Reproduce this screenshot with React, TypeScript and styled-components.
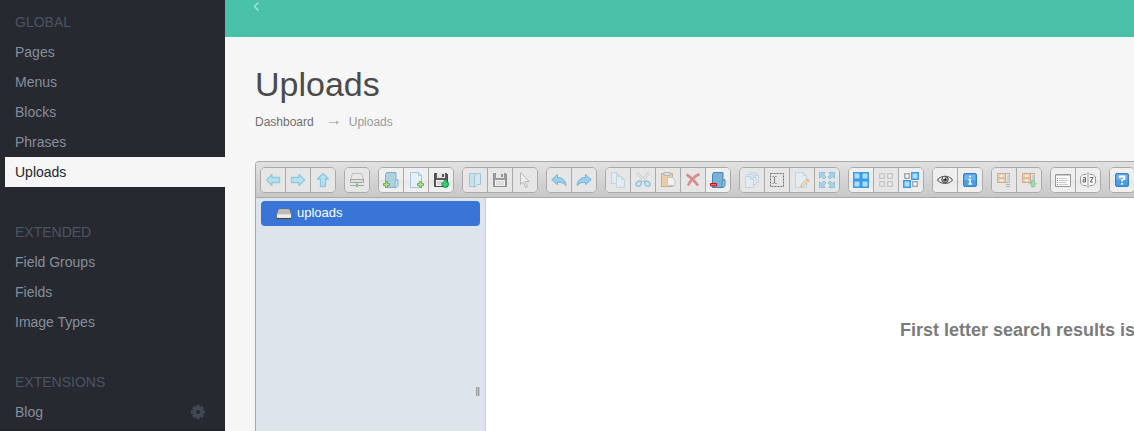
import React from 'react';
import styled, { createGlobalStyle } from 'styled-components';

const Global = createGlobalStyle`
  * { box-sizing: border-box; }
  body { margin: 0; overflow: hidden; background: #f6f6f6; font-family: "Liberation Sans", Arial, sans-serif; }
`;
const Page = styled.div`display: flex; width: 100vw; height: 100vh; overflow: hidden;`;
const Sidebar = styled.nav`
  width: 225px; flex: none; height: 100vh; overflow: hidden;
  background: #262930; padding-top: 7px;
`;
const Section = styled.section`margin-bottom: 30px;`;
const SectionTitle = styled.div`
  height: 30px; line-height: 30px; padding-left: 15px; font-size: 14px; color: #4c5462; text-transform: uppercase;
`;
const NavItem = styled.a<{ $active?: boolean }>`
  display: flex; align-items: center; justify-content: space-between;
  height: 30px; margin-left: 5px; padding: 0 20px 0 10px; font-size: 14px;
  color: ${p => (p.$active ? '#22262e' : '#868e9b')};
  background: ${p => (p.$active ? '#f6f6f6' : 'transparent')};
`;
const NavDivider = styled.div`height: 1px; margin-top: 3px; background: #1d1f26;`;
const Main = styled.main`flex: 1; min-width: 0; display: flex; flex-direction: column;`;
const TopBar = styled.header`
  height: 37px; flex: none; background: #4ac1a9; padding: 1px 0 0 28px;
  svg { display: block; }
`;
const Content = styled.div`flex: 1; min-height: 0; display: flex; flex-direction: column; padding: 27px 0 0 30px;`;
const Title = styled.h1`margin: 0; height: 40px; line-height: 40px; font-size: 34px; font-weight: 400; color: #4b4b4d;`;
const Crumbs = styled.div`
  display: flex; align-items: center; height: 18px; margin-top: 9px; font-size: 12px; color: #9b9b9b;
  a { color: #6f6f6f; }
  svg { margin: 0 9px 0 15px; }
`;
const Manager = styled.div`
  flex: 1; min-height: 0; width: 1100px; margin-top: 30px; display: flex; flex-direction: column;
  border: 1px solid #aaa; border-bottom: 0; border-radius: 4px 4px 0 0; overflow: hidden; background: #fff;
`;
const Toolbar = styled.div`
  display: flex; gap: 8px; height: 36px; flex: none; padding: 5px 4px 0;
  border-bottom: 1px solid #aaa; background: linear-gradient(#e1e1e1, #c8c8c8);
`;
const Group = styled.div`
  display: flex; flex: none; height: 26px; border: 1px solid #aaa; border-radius: 5px; overflow: hidden;
`;
const Button = styled.span<{ $off?: boolean }>`
  box-sizing: content-box; flex: none; width: 16px; height: 16px; padding: 4px;
  background: ${p => (p.$off ? '#e6e6e6' : 'linear-gradient(#efefef 0 50%, #e7e7e7 50%, #f1f1f1)')};
  & + & { border-left: 1px solid #aaa; }
  svg { display: block; }
`;
const Work = styled.div`display: flex; flex: 1; min-height: 0;`;
const Tree = styled.aside`
  width: 230px; flex: none; display: flex; flex-direction: column; padding: 3px 5px 35px;
  background: #dde4eb; border-right: 1px solid #ccc;
`;
const TreeItem = styled.div`
  display: flex; align-items: center; height: 25px; flex: none; padding: 0 0 2px 15px; gap: 5px;
  border-radius: 4px; background: #3875d7; color: #fff; font-size: 13px;
  svg { margin-top: 3px; }
`;
const Grip = styled.i`
  align-self: flex-end; margin-top: auto; width: 4px; height: 9px;
  background: linear-gradient(90deg, #999 0 1px, #c5c8cc 1px 2px, #999 2px 3px, #c5c8cc 3px);
`;
const Files = styled.div`flex: 1; padding-top: 121px; padding-left: 414px; overflow: hidden;`;
const Message = styled.div`white-space: nowrap; font-size: 18px; line-height: 22px; font-weight: 700; color: #7b7b7b;`;

type IconName = keyof typeof drawings;
const pageShape = (x: number, y: number, w: number, h: number) => (
  <path d={`M${x} ${y}h${w - 3}l3 3v${h - 3}h-${w}zM${x + w - 3} ${y}v3h3`} fill="#e4f0f8" stroke="#a6c8dd" />
);
const plus = (x: number, y: number) => (
  <path d={`M${x + 2} ${y}h2v2h2v2h-2v2h-2v-2h-2v-2h2z`} fill="#b5e08e" stroke="#5fae45" strokeWidth=".9" />
);
const arrowL = <path d="M1.500 8L7 2.500v3h7.500v5H7v3z" fill="#a8dff5" stroke="#7cc0dc" strokeWidth="1.300" strokeLinejoin="round" />;
const undo = <path d="M.700 7.500L6.500 2.500v3c5 0 8 2.500 8.500 8C12.500 11 10.500 10.300 6.500 10.300v2.500z" fill="#7fc6f0" stroke="#4b9ccc" strokeWidth=".9" />;
const floppy = (
  <>
    <path d="M1.500 1.500h12l1 1v12h-13z" fill="#5b5b5b" stroke="#4a4a4a" />
    <path d="M4 1h8v5H4z" fill="#e6e6e6" /><path d="M9 2h2v3H9z" fill="#555" />
    <path d="M3 8h10v6H3z" fill="#f4f4f4" /><path d="M4 10h8M4 12h8" stroke="#bbb" />
  </>
);
const folder = (fill: string, light: string, line: string) => (
  <>
    <path d="M3.500.500h9.500v15H2.500v-13z" fill={fill} stroke={line} />
    <path d="M12 15.500V10l1.500-2.500h1.500v6l-1.500 2z" fill={light} stroke={line} strokeWidth=".9" />
  </>
);
const cell = (x: number, y: number, on: boolean) => (
  <rect x={x + 0.75} y={y + 0.75} width={on ? 6.5 : 4.5} height={on ? 6.5 : 4.5}
    fill={on ? '#afddff' : '#f8f8f8'} stroke={on ? '#2f97e8' : '#999'} strokeWidth={on ? 1.4 : 1.2} />
);
const cabinet = (
  <>
    <path d="M1.500 1.500h8v9h-8zM1.500 6h8" fill="#f0c59b" stroke="#c98654" />
    <path d="M4 4h3M4 8.300h3" stroke="#fff" strokeWidth="1.300" />
    <path d="M9 1.500h5M9 10.500h5M10 12.500h4M10 14.500h4" stroke="#8a8a8a" />
    <path d="M11 4h2M11 6h2M11 8h2" stroke="#999" strokeWidth="1.200" />
    <path d="M13.500 2v9" stroke="#aaa" />
  </>
);
const badge = (
  <>
    <rect x="1.500" y="1.500" width="13" height="13" rx="1.500" fill="#3f93e0" stroke="#3c80c4" />
    <path d="M2.500 2.500h11V8h-11z" fill="#6fb4ee" /><path d="M2.500 8h11v5.500h-11z" fill="#4a9fe8" />
  </>
);
const drawings = {
  back: arrowL,
  forward: <g transform="matrix(-1 0 0 1 16 0)">{arrowL}</g>,
  up: <g transform="rotate(90 8 8)">{arrowL}</g>,
  netmount: (
    <>
      <path d="M3.500 1.500h9l2 6h-13z" fill="#e8e8e8" stroke="#aaa" /><path d="M1.500 7.500h13v3h-13z" fill="#ddd" stroke="#888" />
      <path d="M8 11v2M1 13.500h14" stroke="#888" strokeWidth="1.200" /><path d="M6 13.500l2-2 2 2-2 2z" fill="#4fb65e" />
    </>
  ),
  mkdir: <>{folder('#aed1e1', '#bfdfea', '#82afc8')}{plus(0.5, 9.5)}</>,
  mkfile: <>{pageShape(2.5, 0.5, 11, 15)}{plus(9.5, 9.5)}</>,
  upload: <>{floppy}<path d="M11 8.500h3v2.200h2v2.800h-2v2.200h-3v-2.200H8.800v-2.800H11z" fill="#3ecb72" stroke="#14984a" strokeWidth=".7" /></>,
  open: <><path d="M2.500 1.500h6v13h-6z" fill="#b4d8eb" stroke="#6ba9cb" /><path d="M7.500 3.500l3-2h3v11h-3l-3 3z" fill="#c6e4f2" stroke="#6ba9cb" /></>,
  floppy,
  cursor: <path d="M3.500.500v12l3-2.500 2 5.500 2-.8-2.200-5.200h4z" fill="#f6f6f6" stroke="#888" />,
  undo,
  redo: <g transform="matrix(-1 0 0 1 16 0)">{undo}</g>,
  copy: <>{pageShape(1.5, 0.5, 8, 11)}{pageShape(6.5, 4.5, 8, 11)}</>,
  cut: (
    <>
      <path d="M2 1l8.500 9M14 1L5.500 10" stroke="#999" strokeWidth="2.400" /><path d="M2 1l8.500 9M14 1L5.500 10" stroke="#eee" strokeWidth="1.200" />
      <path d="M6.500 9.500c-3-1-5.500.5-5.500 3 0 2 3.500 2.500 5 0zM9.500 9.500c3-1 5.500.5 5.500 3 0 2-3.500 2.500-5 0z" fill="none" stroke="#5dafd9" strokeWidth="1.600" />
    </>
  ),
  paste: <><path d="M1.500 1.500h11v13h-11z" fill="#e8bd85" stroke="#bd8546" /><path d="M4 .500h6v3H4z" fill="#ddd" stroke="#999" /><path d="M7.500 5.500h5l2.500 2.500v5.500H7.500z" fill="#f8f8f8" stroke="#aab4bc" /></>,
  remove: <path d="M1.500 2.500C6 5 9 8.500 13 13.500M14.500 2C9 4.500 5.500 8.500 3 13.500" fill="none" stroke="#c5353a" strokeWidth="2.700" />,
  empty: <>{folder('#79b2d8', '#8fc2e2', '#4f83aa')}<path d="M.500 11.500h6v2.500h-6z" fill="#f26a6a" stroke="#b8181c" /></>,
  duplicate: <>{pageShape(6.5, 0.5, 8, 10)}{pageShape(4, 2.5, 8, 10)}{pageShape(1.5, 4.5, 8, 11)}</>,
  rename: <><rect x="1.500" y="1.500" width="13" height="13" fill="none" stroke="#222" strokeDasharray="2 1" /><path d="M3.500 4.500h1l1 1 1-1h1M5.500 5v6M3.500 11.500h1l1-1 1 1h1" fill="none" stroke="#333" /></>,
  edit: <>{pageShape(1.5, 0.5, 11, 15)}<path d="M6.500 15l1-3 5.500-5 2 2-5.500 5z" fill="#f5d489" stroke="#b99766" strokeWidth=".7" /><path d="M12.800 7.200l2 2" stroke="#e88a80" strokeWidth="1.800" /></>,
  resize: (
    <g fill="#7cc6e8" stroke="#4ba5cb" strokeWidth=".9">
      {[0, 90, 180, 270].map(a => <path key={a} transform={`rotate(${a} 8 8)`} d="M.500.500h5.500L4.700 2.500 7 5 5 7 2.500 4.700.500 6z" />)}
    </g>
  ),
  icons: <>{cell(0, 0, true)}{cell(8, 0, true)}{cell(0, 8, true)}{cell(8, 8, true)}</>,
  none: <>{cell(1, 1, false)}{cell(9, 1, false)}{cell(1, 9, false)}{cell(9, 9, false)}</>,
  invert: <>{cell(1, 1, false)}{cell(8, 0, true)}{cell(0, 8, true)}{cell(9, 9, false)}</>,
  eye: (
    <>
      <path d="M.500 8C4 3 12 3 15.500 8 12 12.500 4 12.500.500 8z" fill="#f5f5f5" stroke="#666" strokeWidth="1.200" />
      <circle cx="8" cy="7.500" r="3.300" fill="#999" stroke="#555" /><circle cx="8" cy="7.500" r="1.500" fill="#333" /><circle cx="7" cy="6" r="1" fill="#fff" />
    </>
  ),
  info: <>{badge}<path d="M7 4.500h2M6.500 7.500H8V12M6.500 12h3.500" fill="none" stroke="#fff" strokeWidth="1.600" /></>,
  extract: cabinet,
  archive: <>{cabinet}<path d="M10.500 8.500h3v3h2l-3.500 4-3.500-4h2z" fill="#6fdc80" stroke="#4fb560" strokeWidth=".6" /></>,
  list: (
    <>
      <path d="M.500 2.500h15v12H.500z" fill="#fafafa" stroke="#999" /><path d="M1 3.500h14" stroke="#ccc" />
      <path d="M2 6.500h1M2 8.500h1M2 10.500h1M2 12.500h1" stroke="#888" /><path d="M4 6.500h8M4 8.500h9M4 10.500h7M4 12.500h9" stroke="#ccc" />
    </>
  ),
  sort: (
    <>
      <path d="M6 2.500H3L.500 5v6L3 13.500h3l2 2 2-2h3l2.500-2.500V5L13 2.500h-3l-2-2z" fill="#fafafa" stroke="#999" />
      <path d="M8 2v12" stroke="#999" />
      <path d="M3 5.500h2.500V10H3V7.700h2.500M10 5.500h3L10.200 10H13" fill="none" stroke="#666" />
    </>
  ),
  help: <>{badge}<path d="M5.800 6V4.500h4.500V7L8 8.300V9.500M8 11v1.700" fill="none" stroke="#fff" strokeWidth="1.800" /></>,
};

const groups: { name: IconName; dim?: number }[][] = [
  [{ name: 'back', dim: 0.75 }, { name: 'forward', dim: 0.75 }, { name: 'up', dim: 0.8 }],
  [{ name: 'netmount', dim: 0.7 }],
  [{ name: 'mkdir' }, { name: 'mkfile' }, { name: 'upload' }],
  [{ name: 'open', dim: 0.55 }, { name: 'floppy', dim: 0.55 }, { name: 'cursor', dim: 0.5 }],
  [{ name: 'undo', dim: 0.75 }, { name: 'redo', dim: 0.75 }],
  [{ name: 'copy', dim: 0.6 }, { name: 'cut', dim: 0.6 }, { name: 'paste', dim: 0.6 }, { name: 'remove', dim: 0.5 }, { name: 'empty' }],
  [{ name: 'duplicate', dim: 0.6 }, { name: 'rename', dim: 0.6 }, { name: 'edit', dim: 0.6 }, { name: 'resize', dim: 0.6 }],
  [{ name: 'icons' }, { name: 'none', dim: 0.5 }, { name: 'invert' }],
  [{ name: 'eye' }, { name: 'info' }],
  [{ name: 'extract', dim: 0.6 }, { name: 'archive', dim: 0.65 }],
  [{ name: 'list' }, { name: 'sort' }],
  [{ name: 'help' }],
];

const Gear = () => (
  <svg width="14" height="14" viewBox="-7 -7 14 14" fill="#424856">
    {[0, 45, 90, 135].map(a => <rect key={a} x="-1.700" y="-7" width="3.400" height="14" rx=".5" transform={`rotate(${a})`} />)}
    <circle r="5.200" />
    <circle r="2" fill="#262930" />
  </svg>
);

const menu = [
  { title: 'Global', items: ['Pages', 'Menus', 'Blocks', 'Phrases', 'Uploads'] },
  { title: 'Extended', items: ['Field Groups', 'Fields', 'Image Types'] },
];

export default function App() {
  return (
    <Page>
      <Global />
      <Sidebar>
        {menu.map(s => (
          <Section key={s.title}>
            <SectionTitle>{s.title}</SectionTitle>
            {s.items.map(i => <NavItem key={i} $active={i === 'Uploads'}>{i}</NavItem>)}
          </Section>
        ))}
        <SectionTitle>Extensions</SectionTitle>
        <NavItem>Blog<Gear /></NavItem>
        <NavDivider />
      </Sidebar>
      <Main>
        <TopBar>
          <svg width="7" height="11" viewBox="0 0 7 11"><path d="M5.500 1.500l-4 4 4 4" fill="none" stroke="#a6e2d6" strokeWidth="1.500" /></svg>
        </TopBar>
        <Content>
          <Title>Uploads</Title>
          <Crumbs>
            <a>Dashboard</a>
            <svg width="11" height="7" viewBox="0 0 11 7"><path d="M0 3.500h8" stroke="#bbb" /><path d="M7 1.500l3 2-3 2z" fill="#b0b0b0" /></svg>
            <span>Uploads</span>
          </Crumbs>
          <Manager>
            <Toolbar>
              {groups.map((g, n) => (
                <Group key={n}>
                  {g.map(b => (
                    <Button key={b.name} $off={!!b.dim}>
                      <svg width="16" height="16" viewBox="0 0 16 16" opacity={b.dim ?? 1}>{drawings[b.name]}</svg>
                    </Button>
                  ))}
                </Group>
              ))}
            </Toolbar>
            <Work>
              <Tree>
                <TreeItem>
                  <svg width="16" height="12" viewBox="0 0 16 12">
                    <path d="M2.500 1h11l2 6v4H.500V7z" fill="#ddd" stroke="#666" strokeWidth=".8" />
                    <path d="M3 1.500h10l1.500 5h-13z" fill="#b9b9b9" /><path d="M1 6.500h14v3H1z" fill="#ececec" /><path d="M.500 10.500h15" stroke="#444" />
                  </svg>
                  uploads
                </TreeItem>
                <Grip />
              </Tree>
              <Files><Message>First letter search results is empty.</Message></Files>
            </Work>
          </Manager>
        </Content>
      </Main>
    </Page>
  );
}
